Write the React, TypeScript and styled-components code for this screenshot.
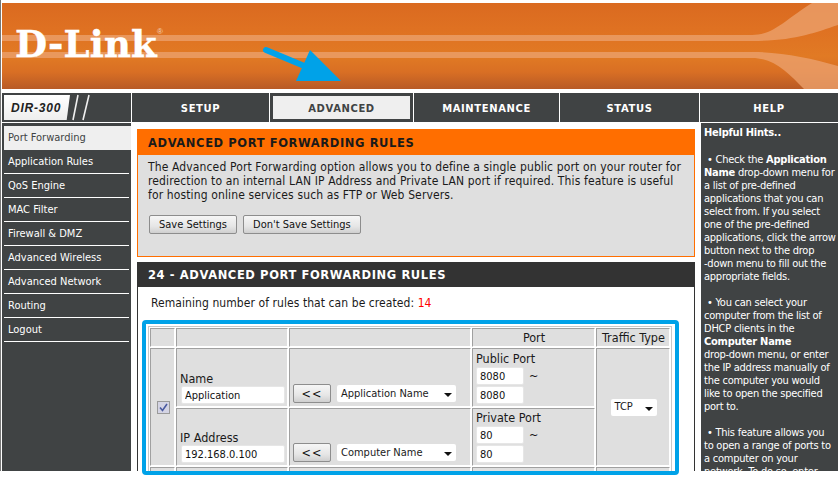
import React from "react";
import styled, { createGlobalStyle } from "styled-components";

const Global = createGlobalStyle`
  html, body { margin: 0; padding: 0; background: #fff; width: 840px; height: 477px; overflow: hidden; }
  * { box-sizing: border-box; }
  body { font-family: "DejaVu Sans Condensed", "DejaVu Sans", Tahoma, sans-serif; font-stretch: condensed; font-size: 11px; color: #1a1a1a; }
`;

const Page = styled.div`
  width: 840px;
  height: 471px;
  padding: 3px 2px 0 1px;
  border-left: 1px solid #777;
  display: flex;
  flex-direction: column;
`;

const Banner = styled.header`
  position: relative;
  height: 86px;
  flex: none;
  overflow: hidden;
  padding: 19px 0 0 13px;
  background: linear-gradient(180deg, #da6a20 0%, #df7122 30%, #e17a24 62%, #d96f24 80%, #b85a26 100%);
`;

const BannerArt = styled.svg`
  position: absolute;
  inset: 0;
`;

const Logo = styled.div`
  position: relative;
  display: inline-flex;
  align-items: flex-start;
  font-family: "DejaVu Serif", serif;
  font-stretch: normal;
  font-weight: 700;
  font-size: 37px;
  line-height: 44px;
  letter-spacing: 0.2px;
  -webkit-text-stroke: 0.4px #fff;
  color: #fff;
`;

const Reg = styled.span`
  font-family: "Liberation Sans", sans-serif;
  font-size: 8px;
  line-height: 12px;
  font-weight: 400;
  letter-spacing: 0;
  -webkit-text-stroke: 0;
  margin: 4px 0 0 0;
  color: #f5d5bb;
`;

const Nav = styled.nav`
  margin-top: 4px;
  flex: none;
  height: 29px;
  display: grid;
  grid-template-columns: 129px 137px 143px 145px 139px 1fr;
  gap: 1px;
`;

const Model = styled.div`
  background: #404344;
  padding: 2px 0 2px 2px;
  display: flex;
  align-items: stretch;
  overflow: hidden;
`;

const ModelTag = styled.div`
  width: 66px;
  background: linear-gradient(180deg, #fff, #eee);
  clip-path: polygon(0 0, 100% 0, 95% 100%, 0 100%);
  font-family: "Liberation Sans", sans-serif;
  font-stretch: normal;
  font-style: italic;
  font-weight: 700;
  font-size: 12px;
  letter-spacing: 0.8px;
  color: #222;
  display: flex;
  align-items: center;
  padding-left: 7px;
`;

const Slashes = styled.svg`
  margin: -2px 0 0 2px;
`;

const Tab = styled.div<{ $active?: boolean }>`
  display: flex;
  align-items: center;
  justify-content: center;
  padding-top: 1px;
  background: ${(p) => (p.$active ? "#efefef" : "#404344")};
  border: ${(p) => (p.$active ? "3px solid #404344" : "0")};
  color: ${(p) => (p.$active ? "#404344" : "#fff")};
  font-family: "DejaVu Sans", sans-serif;
  font-stretch: normal;
  font-weight: 700;
  font-size: 10px;
  letter-spacing: 0.6px;
`;

const Body = styled.div`
  height: 348px;
  flex: none;
  margin-top: 1px;
  display: grid;
  grid-template-columns: 129px 1fr 137px;
  align-items: stretch;
`;

const Side = styled.aside`
  background: #404344;
  padding: 3px 0 0 2px;
`;

const SideItem = styled.div<{ $active?: boolean }>`
  height: 24px;
  display: flex;
  align-items: center;
  padding-left: 4px;
  margin-right: ${(p) => (p.$active ? "0" : "2px")};
  background: ${(p) => (p.$active ? "#efefef" : "transparent")};
  border-bottom: 1px solid ${(p) => (p.$active ? "#efefef" : "#fff")};
  color: ${(p) => (p.$active ? "#404344" : "#fff")};
  white-space: nowrap;
`;

const Main = styled.main`
  padding: 6px 6px 0 6px;
  min-width: 0;
`;

const Notice = styled.section`
  height: 128px;
  background: #dfdfdf;
  border: 1px solid #ff6e00;
`;

const Heading = styled.h2<{ $dark?: boolean }>`
  margin: 0;
  height: 25px;
  display: flex;
  align-items: center;
  padding: ${(p) => (p.$dark ? "1px" : "0")} 0 0 10px;
  background: ${(p) => (p.$dark ? "#333" : "#ff6e00")};
  color: ${(p) => (p.$dark ? "#fff" : "#1a1a1a")};
  font-family: "DejaVu Sans", sans-serif;
  font-stretch: normal;
  font-size: 11.5px;
  font-weight: 700;
  letter-spacing: 0.6px;
`;

const Intro = styled.p`
  margin: 0;
  padding: 5px 10px 0 10px;
  font-size: 12px;
  line-height: 14px;
  letter-spacing: 0.13px;
`;

const Actions = styled.div`
  display: flex;
  gap: 6px;
  padding: 13px 0 0 11px;
`;

const Btn = styled.button`
  height: 19px;
  padding: 0 9px;
  border: 1px solid #8d8d8d;
  border-radius: 2px;
  background: linear-gradient(180deg, #f6f6f6, #e6e6e6 60%, #cfcfcf);
  font: inherit;
  line-height: 15px;
  color: #111;
`;

const Rules = styled.section`
  margin-top: 5px;
  border-left: 1px solid #333;
  border-right: 1px solid #333;
  height: 209px;
`;

const Remaining = styled.p`
  margin: 0;
  padding: 9px 0 0 13px;
  font-size: 12px;
  line-height: 15px;
  letter-spacing: 0.07px;
`;

const Count = styled.span`
  color: #f00;
`;

const Frame = styled.div`
  margin: 9px 15px 0 4px;
  height: 155px;
  padding: 2px;
  border: 4px solid #00a2e8;
  border-radius: 4px;
  overflow: hidden;
  background: #fff;
`;

const Table = styled.table`
  width: 524px;
  table-layout: fixed;
  border-collapse: separate;
  border-spacing: 1px;
  border: 1px solid #c8c8c8;
`;

const Row = styled.tr<{ $h: number }>`
  height: ${(p) => p.$h}px;
`;

const Cell = styled.td<{ $center?: boolean }>`
  background: #dfdfdf;
  border: 1px solid;
  border-color: #a0a0a0 #fff #fff #a0a0a0;
  padding: ${(p) => (p.$center ? "0 2px 0 3px" : "0 2px 2px 3px")};
  line-height: 14px;
  font-size: 12.5px;
  vertical-align: ${(p) => (p.$center ? "middle" : "bottom")};
  text-align: ${(p) => (p.$center ? "center" : "left")};
`;

const Field = styled.input`
  display: block;
  height: 18px;
  width: 104px;
  margin-left: 1px;
  border: 1px solid #e6e6e6;
  border-radius: 2px;
  background: #fff;
  padding: 0 3px;
  font: inherit;
  font-size: 11px;
  color: #111;
`;

const SmallField = styled(Field)`
  width: 48px;
  margin-left: 0;
`;

const PortLine = styled.div`
  display: flex;
  align-items: center;
  margin-top: 1px;
`;

const Tilde = styled.span`
  margin-left: 5px;
`;

const Controls = styled.div`
  display: flex;
  align-items: center;
  gap: 6px;
  margin: 0 0 1px 0;
`;

const Small = styled(Btn)`
  width: 38px;
  padding: 0;
  flex: none;
  letter-spacing: 1px;
`;

const Combo = styled.div<{ $w: number }>`
  width: ${(p) => p.$w}px;
  height: 17px;
  background: #fff;
  border-radius: 2px;
  padding: 0 4px 0 4px;
  display: flex;
  align-items: center;
  justify-content: space-between;
  font-size: 11px;
  text-align: left;
`;

const Caret = styled.span`
  width: 0;
  height: 0;
  margin-top: 3px;
  border: 4px solid transparent;
  border-top: 4px solid #111;
  border-bottom: 0;
`;

const TrafficCombo = styled(Combo)`
  margin: 0 auto;
`;

const Check = styled.svg`
  display: block;
  margin: 0 auto;
`;

const Help = styled.aside`
  overflow: hidden;
  background: #404344;
  color: #fff;
  padding: 3px 0 0 3px;
  line-height: 13px;
  font-size: 11px;
  letter-spacing: -0.24px;
  white-space: nowrap;
`;

const HelpTitle = styled.strong`
  display: block;
  margin-bottom: 14px;
`;

const Hint = styled.p`
  margin: 0 0 13px;
`;

const Lead = styled.span`
  margin-left: 3px;
`;

const tabs = ["SETUP", "ADVANCED", "MAINTENANCE", "STATUS", "HELP"];
const menu = ["Port Forwarding", "Application Rules", "QoS Engine", "MAC Filter", "Firewall & DMZ", "Advanced Wireless", "Advanced Network", "Routing", "Logout"];

export default function App() {
  return (
    <Page>
      <Global />
      <Banner>
        <BannerArt width="836" height="86" viewBox="0 0 836 86">
          <path d="M0 32h750c22 0 34-16 60-32h26v22c-24 8-44 16-86 16H0Z" fill="#eba06c" opacity=".8" />
          <path d="M0 49h750c30 0 58 6 86 14v23h-34c-16-16-30-31-52-31H0Z" fill="#eba06c" opacity=".8" />
          <path d="M264 47l36 15" stroke="#00a2e8" strokeWidth="6" strokeLinecap="round" />
          <path d="M308 47L294 78H339Z" fill="#00a2e8" />
        </BannerArt>
        <Logo>D-Link<Reg>®</Reg></Logo>
      </Banner>
      <Nav>
        <Model>
          <ModelTag>DIR-300</ModelTag>
          <Slashes width="26" height="29" viewBox="0 0 26 29">
            <path d="M1 27L6 2M11 27L17 2" stroke="#efefef" strokeWidth="1.6" fill="none" />
          </Slashes>
        </Model>
        {tabs.map((t) => (
          <Tab key={t} $active={t === "ADVANCED"}>{t}</Tab>
        ))}
      </Nav>
      <Body>
        <Side>
          {menu.map((m, i) => (
            <SideItem key={m} $active={i === 0}>{m}</SideItem>
          ))}
        </Side>
        <Main>
          <Notice>
            <Heading>ADVANCED PORT FORWARDING RULES</Heading>
            <Intro>
              The Advanced Port Forwarding option allows you to define a single public port on your router for redirection to an internal LAN IP Address and Private LAN port if required. This feature is useful for hosting online services such as FTP or Web Servers.
            </Intro>
            <Actions>
              <Btn>Save Settings</Btn>
              <Btn>Don't Save Settings</Btn>
            </Actions>
          </Notice>
          <Rules>
            <Heading $dark>24 - ADVANCED PORT FORWARDING RULES</Heading>
            <Remaining>Remaining number of rules that can be created: <Count>14</Count></Remaining>
            <Frame>
              <Table>
                <colgroup>
                  <col width="25" />
                  <col width="112" />
                  <col width="182" />
                  <col width="123" />
                  <col width="74" />
                </colgroup>
                <tbody>
                  <Row $h={19}>
                    <Cell />
                    <Cell />
                    <Cell />
                    <Cell $center>Port</Cell>
                    <Cell $center>Traffic Type</Cell>
                  </Row>
                  <Row $h={59}>
                    <Cell $center rowSpan={2}>
                      <Check width="13" height="13" viewBox="0 0 13 13">
                        <rect x=".5" y=".5" width="12" height="12" fill="#d4d4e4" stroke="#9a9a9a" />
                        <path d="M3 6.5l2.5 3L10 3" fill="none" stroke="#4a5aa0" strokeWidth="1.6" />
                      </Check>
                    </Cell>
                    <Cell>
                      Name
                      <Field readOnly defaultValue="Application" />
                    </Cell>
                    <Cell>
                      <Controls>
                        <Small>&lt;&lt;</Small>
                        <Combo $w={119}>Application Name<Caret /></Combo>
                      </Controls>
                    </Cell>
                    <Cell>
                      Public Port
                      <PortLine><SmallField readOnly defaultValue="8080" /><Tilde>~</Tilde></PortLine>
                      <PortLine><SmallField readOnly defaultValue="8080" /></PortLine>
                    </Cell>
                    <Cell $center rowSpan={2}>
                      <TrafficCombo $w={46}>TCP<Caret /></TrafficCombo>
                    </Cell>
                  </Row>
                  <Row $h={58}>
                    <Cell>
                      IP Address
                      <Field readOnly defaultValue="192.168.0.100" />
                    </Cell>
                    <Cell>
                      <Controls>
                        <Small>&lt;&lt;</Small>
                        <Combo $w={119}>Computer Name<Caret /></Combo>
                      </Controls>
                    </Cell>
                    <Cell>
                      Private Port
                      <PortLine><SmallField readOnly defaultValue="80" /><Tilde>~</Tilde></PortLine>
                      <PortLine><SmallField readOnly defaultValue="80" /></PortLine>
                    </Cell>
                  </Row>
                  <Row $h={20}>
                    <Cell />
                    <Cell />
                    <Cell />
                    <Cell />
                    <Cell />
                  </Row>
                </tbody>
              </Table>
            </Frame>
          </Rules>
        </Main>
        <Help>
          <HelpTitle>Helpful Hints..</HelpTitle>
          <Hint>
            <Lead>• Check the </Lead><strong>Application</strong><br />
            <strong>Name</strong> drop-down menu for<br />
            a list of pre-defined<br />
            applications that you can<br />
            select from. If you select<br />
            one of the pre-defined<br />
            applications, click the arrow<br />
            button next to the drop<br />
            -down menu to fill out the<br />
            appropriate fields.
          </Hint>
          <Hint>
            <Lead>• You can select your</Lead><br />
            computer from the list of<br />
            DHCP clients in the<br />
            <strong>Computer Name</strong><br />
            drop-down menu, or enter<br />
            the IP address manually of<br />
            the computer you would<br />
            like to open the specified<br />
            port to.
          </Hint>
          <Hint>
            <Lead>• This feature allows you</Lead><br />
            to open a range of ports to<br />
            a computer on your<br />
            network. To do so, enter
          </Hint>
        </Help>
      </Body>
    </Page>
  );
}
